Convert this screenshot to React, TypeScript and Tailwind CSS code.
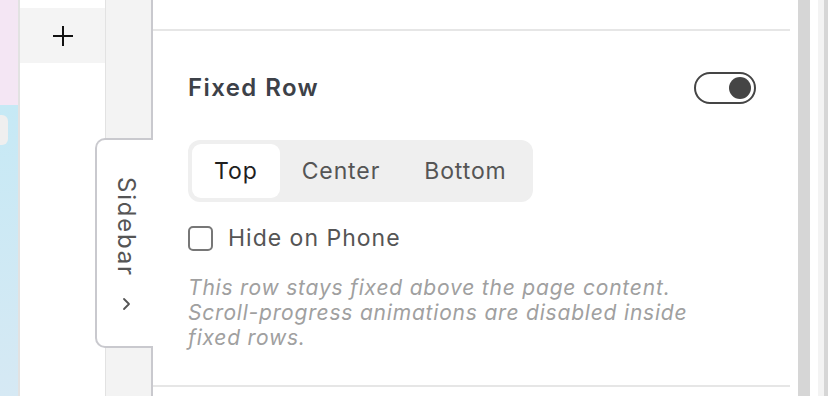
import { useState } from 'react'

function PlusIcon() {
  return (
    <svg width="22" height="22" viewBox="0 0 22 22" fill="none" stroke="#111" strokeWidth="2">
      <path d="M11 1v20M1 11h20" />
    </svg>
  )
}

function ChevronRight() {
  return (
    <svg width="10" height="14" viewBox="0 0 10 14" fill="none" stroke="#555" strokeWidth="1.8" strokeLinecap="round" strokeLinejoin="round">
      <path d="M3 2l5 5-5 5" />
    </svg>
  )
}

export default function App() {
  const [pos, setPos] = useState('Top')
  const [fixed, setFixed] = useState(true)
  const [hide, setHide] = useState(false)

  return (
    <div className="w-[828px] h-[396px] flex overflow-hidden bg-white font-['Inter',sans-serif]">
      {/* canvas strip */}
      <div className="w-[18px] flex flex-col">
        <div className="h-[105px] bg-[#f4e6f4]" />
        <div className="flex-1 bg-gradient-to-b from-[#c6e9f5] to-[#d6e9f4] pt-[10px]">
          <div className="w-[8px] h-[30px] bg-[#efefef] rounded-r-[6px]" />
        </div>
      </div>
      <div className="w-[2px] bg-[#e2e2e2]" />

      {/* add column */}
      <div className="w-[85px] pt-[8px] bg-white">
        <div className="h-[55px] bg-[#f4f4f4] flex items-center justify-center">
          <PlusIcon />
        </div>
      </div>

      {/* sidebar rail + tab */}
      <div className="w-[48px] flex flex-col">
        <div className="h-[138px] bg-[#f3f3f3] border-l border-l-[#e2e2e2] border-r-2 border-r-[#c9c9ce]" />
        <div className="h-[210px] -ml-[10px] bg-white border-2 border-r-0 border-[#c9c9ce] rounded-l-[10px] flex flex-col items-center pt-[37px]">
          <span className="[writing-mode:vertical-rl] text-[24px] leading-[28px] text-[#555] tracking-[1.8px] ml-[2px]">Sidebar</span>
          <div className="mt-[20px] ml-[2px]">
            <ChevronRight />
          </div>
        </div>
        <div className="flex-1 bg-[#f3f3f3] border-l border-l-[#e2e2e2] border-r-2 border-r-[#c9c9ce]" />
      </div>

      {/* settings panel */}
      <div className="w-[637px] flex flex-col bg-white">
        <div className="h-[31px] border-b-2 border-[#e6e6e6]" />
        <div className="h-[354px] pl-[35px] pr-[34px] pt-[41px]">
          <div className="h-[32px] flex items-center justify-between">
            <span className="text-[24px] font-semibold text-[#3d4148] tracking-[1.4px]">Fixed Row</span>
            <button
              onClick={() => setFixed(!fixed)}
              className={`w-[62px] h-[32px] rounded-full border-2 border-[#454545] bg-white flex items-center px-[3px] ${fixed ? 'justify-end' : 'justify-start'}`}
            >
              <span className="w-[22px] h-[22px] rounded-full bg-[#454545]" />
            </button>
          </div>

          <div className="mt-[36px] inline-flex p-[4px] bg-[#efefef] rounded-[12px]">
            {['Top', 'Center', 'Bottom'].map((p) => (
              <button
                key={p}
                onClick={() => setPos(p)}
                className={`h-[54px] px-[22px] rounded-[9px] text-[23px] tracking-[0.9px] ${pos === p ? 'bg-white text-[#1f1f1f]' : 'text-[#555]'}`}
              >
                {p}
              </button>
            ))}
          </div>

          <label className="mt-[19px] flex items-center gap-[15px] cursor-pointer">
            <span
              onClick={() => setHide(!hide)}
              className="w-[25px] h-[25px] rounded-[5px] border-2 border-[#777] bg-white"
            />
            <span className="text-[23px] text-[#555] tracking-[1px]">Hide on Phone</span>
          </label>

          <p className="mt-[19px] text-[21px] leading-[25px] italic text-[#a0a0a0] tracking-[0.8px]">
            This row stays fixed above the page content.
            <br />
            Scroll-progress animations are disabled inside
            <br />
            fixed rows.
          </p>
        </div>
        <div className="h-[2px] bg-[#e6e6e6]" />
        <div className="flex-1" />
      </div>

      {/* scrollbar edge */}
      <div className="w-[8px] bg-white" />
      <div className="w-[12px] bg-[#d6d6d6]" />
      <div className="w-[8px] bg-white" />
      <div className="w-[6px] bg-[#f3f3f3]" />
      <div className="w-[4px] bg-[#d6d6d6]" />
    </div>
  )
}
